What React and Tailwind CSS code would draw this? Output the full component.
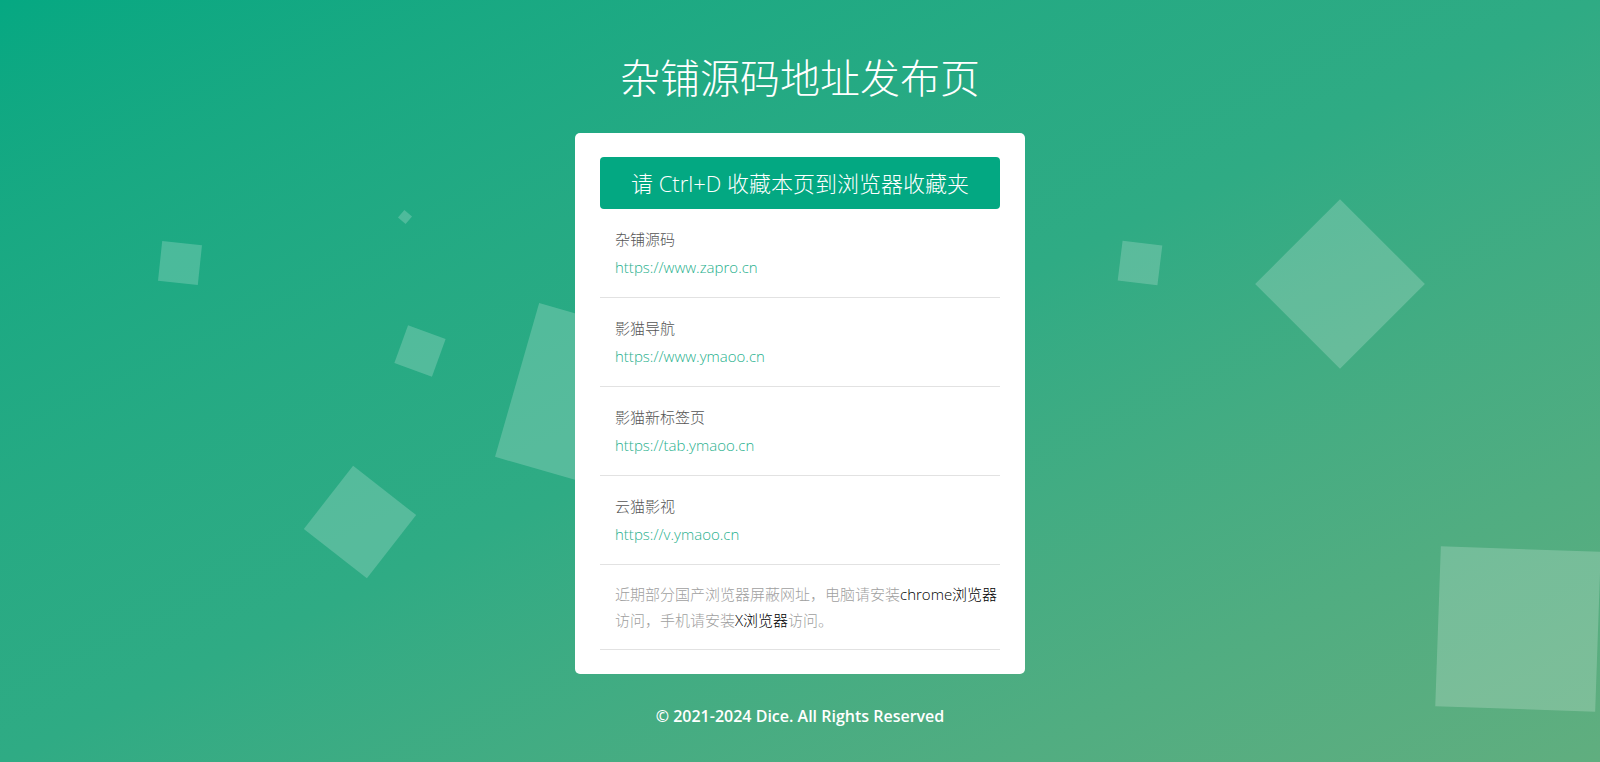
import React from 'react';

const links = [
    { name: '杂铺源码', url: 'https://www.zapro.cn' },
    { name: '影猫导航', url: 'https://www.ymaoo.cn' },
    { name: '影猫新标签页', url: 'https://tab.ymaoo.cn' },
    { name: '云猫影视', url: 'https://v.ymaoo.cn' },
];

// floating squares in the background
const Squares = () => (
    <div className="absolute inset-0 overflow-hidden pointer-events-none">
        <div className="absolute left-[160px] top-[243px] w-[40px] h-[40px] bg-white/20 rotate-[6deg]" />
        <div className="absolute left-[400px] top-[212px] w-[10px] h-[10px] bg-white/20 rotate-[40deg]" />
        <div className="absolute left-[400px] top-[331px] w-[40px] h-[40px] bg-white/20 rotate-[20deg]" />
        <div className="absolute left-[514px] top-[322px] w-[160px] h-[160px] bg-white/20 rotate-[16deg]" />
        <div className="absolute left-[320px] top-[482px] w-[80px] h-[80px] bg-white/20 rotate-[38deg]" />
        <div className="absolute left-[1120px] top-[243px] w-[40px] h-[40px] bg-white/20 rotate-[7deg]" />
        <div className="absolute left-[1280px] top-[224px] w-[120px] h-[120px] bg-white/20 rotate-45" />
        <div className="absolute left-[1438px] top-[549px] w-[160px] h-[160px] bg-white/20 rotate-[2deg]" />
    </div>
);

const App = () => {
    return (
        <div className="relative w-full h-[762px] overflow-hidden bg-gradient-to-br from-[#05a882] via-[#2fab84] to-[#60ae7f] font-['Open_Sans','Noto_Sans_CJK_SC',sans-serif]">
            <Squares />

            <div className="relative flex flex-col items-center pt-[52px]">
                <h1 className="text-white text-[40px] leading-[52px] font-light">杂铺源码地址发布页</h1>

                <div className="mt-[29px] w-[450px] bg-white rounded-[5px] px-[25px] pt-6 pb-6">
                    <div className="h-[52px] rounded-[4px] bg-[#03a882] text-white text-[22px] font-light flex items-center justify-center">
                        请 Ctrl+D 收藏本页到浏览器收藏夹
                    </div>

                    <ul>
                        {links.map((link) => (
                            <li key={link.url} className="pl-[15px] py-4 border-b border-[#e2e2e2]">
                                <p className="text-[15px] leading-[28px] text-[#555] font-light">{link.name}</p>
                                <a href={link.url} className="block text-[15px] leading-[28px] text-[#1fb08d] font-light">
                                    {link.url}
                                </a>
                            </li>
                        ))}
                        <li className="pl-[15px] py-4 border-b border-[#e2e2e2]">
                            <p className="text-[15px] leading-[26px] text-[#a0a0a0] font-light">
                                近期部分国产浏览器屏蔽网址，电脑请安装<span className="text-black">chrome浏览器</span>访问，手机请安装<span className="text-black">X浏览器</span>访问。
                            </p>
                        </li>
                    </ul>
                </div>

                <p className="mt-[30px] text-white text-[16px] leading-6 font-semibold">
                    © 2021-2024 Dice. All Rights Reserved
                </p>
            </div>
        </div>
    );
};

export default App;
